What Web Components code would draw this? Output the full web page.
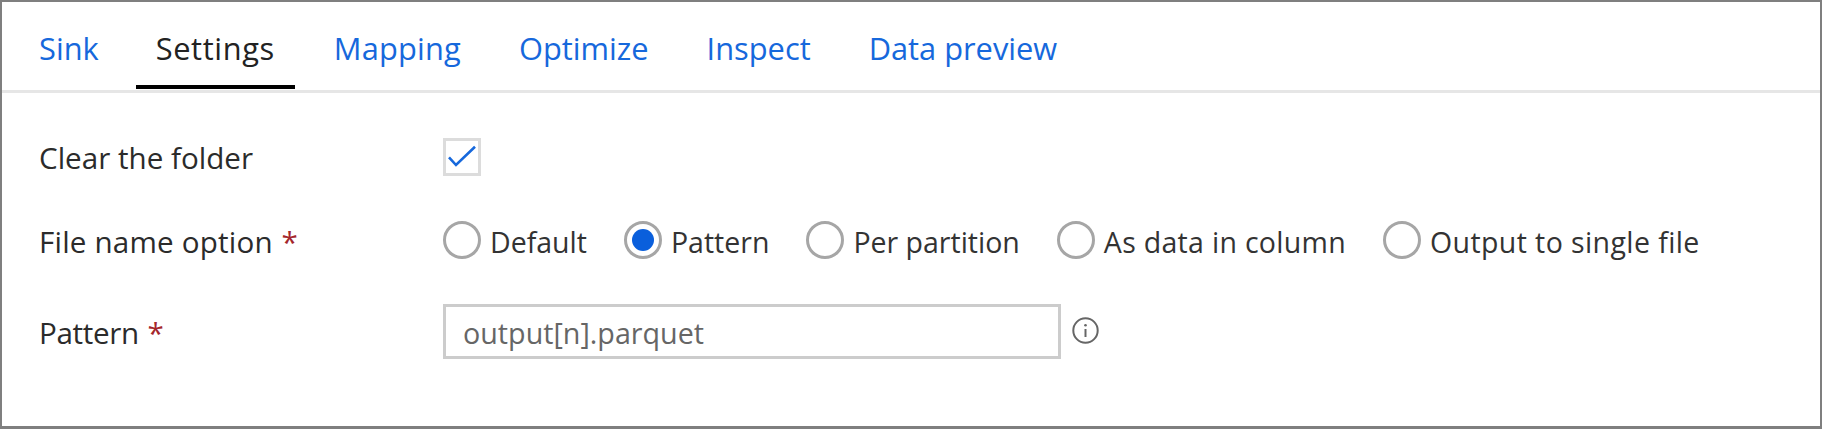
<!DOCTYPE html>
<html lang="en"><head><meta charset="utf-8"><title>Sink settings</title>
<style>
html,body{margin:0;padding:0;background:#fff}
body{font-family:"Open Sans","Noto Sans",sans-serif;font-size:29px;color:#333}
</style></head><body>
<sink-panel>
  <tab-bar>
    <tab-item>Sink</tab-item><tab-item active>Settings</tab-item><tab-item wide>Mapping</tab-item><tab-item>Optimize</tab-item><tab-item>Inspect</tab-item><tab-item>Data preview</tab-item>
  </tab-bar>
  <form-body>
    <form-row label="Clear the folder"><check-box></check-box></form-row>
    <form-row label="File name option" required style="--track:.2px;--nudge:1px">
      <radio-opt>Default</radio-opt><radio-opt checked>Pattern</radio-opt><radio-opt>Per partition</radio-opt><radio-opt wide>As data in column</radio-opt><radio-opt wider>Output to single file</radio-opt>
    </form-row>
    <form-row label="Pattern" required style="--track:-.35px"><text-box>output[n].parquet</text-box><info-icon></info-icon></form-row>
  </form-body>
</sink-panel>
<script>
function def(name,html,init){
  customElements.define(name,class extends HTMLElement{
    constructor(){super();this.attachShadow({mode:'open'}).innerHTML=html;}
    connectedCallback(){if(init)init(this);}
  });
}
def('sink-panel',`<style>:host{display:block;box-sizing:border-box;width:1822px;height:429px;border:solid #7f7f7f;border-width:2px 2px 3px;background:#fff}</style><slot></slot>`);
def('tab-bar',`<style>:host{display:flex;gap:18px;height:88px;padding-left:17px;border-bottom:3px solid #e6e6e6;box-sizing:content-box}</style><slot></slot>`);
def('tab-item',`<style>:host{display:flex;align-items:center;box-sizing:border-box;height:87px;padding:9px 20px 0;color:#1668dc;font-size:30.8px;white-space:nowrap;border-bottom:4px solid transparent}
:host([wide]){letter-spacing:.2px}
:host([active]){color:#222;border-bottom-color:#000;font-weight:500;letter-spacing:.6px;margin-left:-1px;margin-right:1px}</style><slot></slot>`);
def('form-body',`<style>:host{display:block;padding:45px 0 0 37px}</style><slot></slot>`);
def('form-row',`<style>:host{display:grid;grid-template-columns:404px 1fr;align-items:center;min-height:38px;margin-bottom:45px}
#l{color:#2b2b2b;font-size:29.6px;font-weight:500;white-space:nowrap;line-height:36px;padding-top:2px}
#t{letter-spacing:var(--track,0);position:relative;top:var(--nudge,0)}
#s{color:#a4262c;margin-left:1px;position:relative;top:var(--nudge,0)}
#c{display:flex;align-items:center}</style><div id="l"><span id="t"></span><span id="s"> *</span></div><div id="c"><slot></slot></div>`,el=>{
  const r=el.shadowRoot;r.getElementById('t').textContent=el.getAttribute('label');
  if(!el.hasAttribute('required'))r.getElementById('s').remove();
});
def('check-box',`<style>:host{display:block;width:38px;height:38px;box-sizing:border-box;border:3px solid #dcdcdc}svg{display:block}</style><svg width="32" height="32" viewBox="0 0 32 32"><path d="M3 16.3L10 24L29 5.7" fill="none" stroke="#1668dc" stroke-width="2.6"/></svg>`);
def('radio-opt',`<style>:host{display:flex;align-items:center;gap:9px;margin-right:37px;font-size:28.5px;color:#333;white-space:nowrap}
#r{width:38px;height:38px;box-sizing:border-box;border:3px solid #a6a6a6;border-radius:50%;display:flex;align-items:center;justify-content:center;flex:none}
#d{width:22px;height:22px;border-radius:50%;background:#0a5fdc;display:none}
#x{padding-top:4px;line-height:34px;height:34px}
:host([checked]) #d{display:block}
:host([wide]){letter-spacing:.3px}
:host([wider]){letter-spacing:.4px}</style><span id="r"><span id="d"></span></span><span id="x"><slot></slot></span>`);
def('text-box',`<style>:host{display:flex;align-items:center;box-sizing:border-box;width:618px;height:55px;border:3px solid #cccccc;padding:2px 0 0 17px;font-size:28.7px;color:#666;white-space:nowrap}</style><slot></slot>`);
def('info-icon',`<style>:host{display:block;width:27px;height:27px;margin:-2px 0 0 11px}svg{display:block}</style><svg width="27" height="27" viewBox="0 0 27 27" fill="none"><circle cx="13.5" cy="13.5" r="12.2" stroke="#666" stroke-width="2"/><path d="M13.5 12v8" stroke="#666" stroke-width="2"/><circle cx="13.5" cy="8.2" r="1.3" fill="#666"/></svg>`);
</script>
</body></html>
